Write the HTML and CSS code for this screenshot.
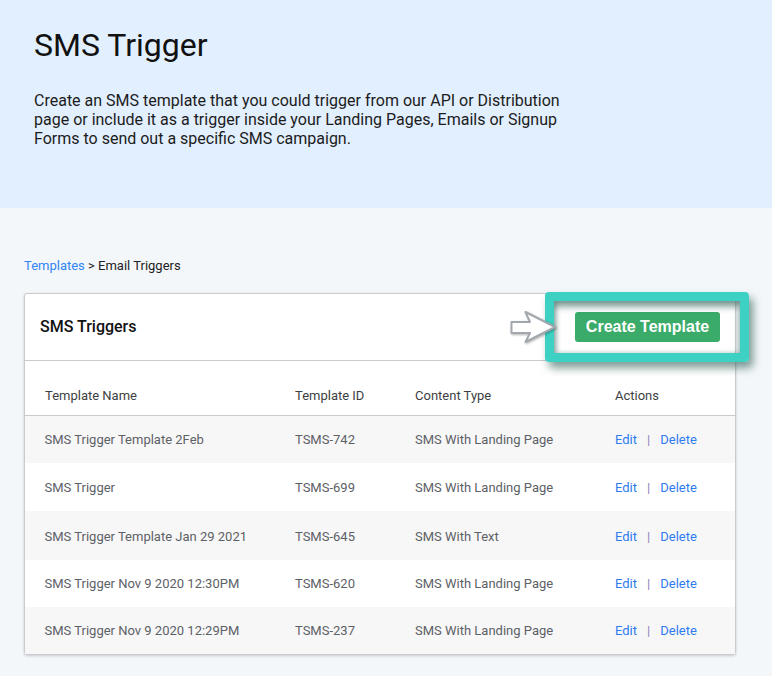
FILE: index.html
```html
<!DOCTYPE html>
<html lang="en">
<head>
<meta charset="utf-8">
<title>SMS Trigger</title>
<link rel="stylesheet" href="styles.css">
</head>
<body>
<header class="hero">
  <h1 class="hero-title">SMS Trigger</h1>
  <p class="hero-text">Create an SMS template that you could trigger from our API or Distribution page or include it as a trigger inside your Landing Pages, Emails or Signup Forms to send out a specific SMS campaign.</p>
</header>
<main class="content">
  <nav class="crumbs"><a class="link-crumb" href="#">Templates</a> &gt; Email Triggers</nav>
  <section class="card">
    <div class="card-head">
      <h2 class="card-title">SMS Triggers</h2>
      <button class="btn-create">Create Template</button>
      <div class="callout"></div>
      <svg class="arrow" width="48" height="36" viewBox="0 0 48 36">
        <path d="M1.500 13H20L15.500 3L45 18L15.500 33L20 24H1.500Z" fill="#fff" stroke="#a3a7ae" stroke-width="2" stroke-linejoin="round"/>
      </svg>
    </div>
    <table class="grid">
      <thead>
        <tr class="head-row"><th class="c1">Template Name</th><th class="c2">Template ID</th><th class="c3">Content Type</th><th class="c4">Actions</th></tr>
      </thead>
      <tbody>
        <tr class="row r1"><td>SMS Trigger Template 2Feb</td><td>TSMS-742</td><td>SMS With Landing Page</td><td><a class="act" href="#">Edit</a><span class="sep">|</span><a class="act" href="#">Delete</a></td></tr>
        <tr class="row r2"><td>SMS Trigger</td><td>TSMS-699</td><td>SMS With Landing Page</td><td><a class="act" href="#">Edit</a><span class="sep">|</span><a class="act" href="#">Delete</a></td></tr>
        <tr class="row r3"><td>SMS Trigger Template Jan 29 2021</td><td>TSMS-645</td><td>SMS With Text</td><td><a class="act" href="#">Edit</a><span class="sep">|</span><a class="act" href="#">Delete</a></td></tr>
        <tr class="row r4"><td>SMS Trigger Nov 9 2020 12:30PM</td><td>TSMS-620</td><td>SMS With Landing Page</td><td><a class="act" href="#">Edit</a><span class="sep">|</span><a class="act" href="#">Delete</a></td></tr>
        <tr class="row r5"><td>SMS Trigger Nov 9 2020 12:29PM</td><td>TSMS-237</td><td>SMS With Landing Page</td><td><a class="act" href="#">Edit</a><span class="sep">|</span><a class="act" href="#">Delete</a></td></tr>
      </tbody>
    </table>
  </section>
</main>
</body>
</html>
```
FILE: styles.css
```css
* { box-sizing: border-box; }
html, body { margin: 0; padding: 0; }
body {
  width: 772px;
  height: 676px;
  overflow: hidden;
  background: #f4f7fa;
  font-family: Roboto, "Liberation Sans", sans-serif;
  color: #111;
}
.hero {
  height: 208px;
  background: #e2effe;
  padding: 26px 34px 0;
}
.hero-title {
  margin: 0;
  font-size: 32px;
  line-height: 38px;
  font-weight: 400;
  color: #111;
}
.hero-text {
  margin: 27px 0 0;
  width: 540px;
  font-size: 16px;
  line-height: 19.200px;
  color: #1c1c1c;
}
.content { padding: 50px 36px 0 24px; }
.crumbs {
  font-size: 13px;
  line-height: 16px;
  height: 35px;
  color: #222;
}
.link-crumb { color: #2f86f0; text-decoration: none; }
.card {
  width: 712px;
  background: #fff;
  border: 1px solid #c9cbce;
  border-radius: 3px;
  box-shadow: 0 1px 3px rgba(0,0,0,.18);
}
.card-head {
  position: relative;
  height: 67px;
  display: flex;
  align-items: center;
  justify-content: space-between;
  padding: 0 15px;
  border-bottom: 1px solid #c9cbce;
}
.card-title {
  margin: 0 0 2px;
  font-size: 16px;
  font-weight: 500;
  color: #111;
}
.btn-create {
  width: 145px;
  height: 30px;
  border: 0;
  border-radius: 3px;
  background: #3aab69;
  color: #fff;
  font-family: "Liberation Sans", Arial, sans-serif;
  font-size: 16px;
  font-weight: 700;
  padding: 0;
}
.callout {
  position: absolute;
  left: 520px;
  top: -2px;
  width: 204px;
  height: 70px;
  border: 9px solid #3dd1c4;
  border-radius: 4px;
  box-shadow: 4px 6px 9px rgba(40,90,80,.6), inset 0 6px 6px rgba(40,90,80,.55), inset 2px 0 5px rgba(40,90,80,.35);
  pointer-events: none;
}
.arrow {
  position: absolute;
  left: 485px;
  top: 15px;
  filter: drop-shadow(1px 1px 1px rgba(0,0,0,.3));
}
.grid {
  width: 710px;
  border-collapse: collapse;
  table-layout: fixed;
  font-size: 13px;
}
.c1 { width: 250px; }
.c2 { width: 120px; }
.c3 { width: 200px; }
.head-row { height: 54px; border-bottom: 1px solid #c9cbce; }
th {
  padding: 15px 0 0 20px;
  text-align: left;
  font-weight: 400;
  color: #3d3f42;
}
td { padding: 0 0 0 20px; color: #5d6166; }
td:first-child { padding-left: 19.500px; }
.row:nth-child(odd) { background: #f7f7f8; }
.r1 { height: 48px; }
.r2 { height: 48px; }
.r3 { height: 49px; }
.r3 td { padding-top: 1px; }
.r4 { height: 47px; }
.r5 { height: 47px; }
.act { color: #2f7bf0; text-decoration: none; }
.sep { margin: 0 10px; color: #8d7fb5; }
```
